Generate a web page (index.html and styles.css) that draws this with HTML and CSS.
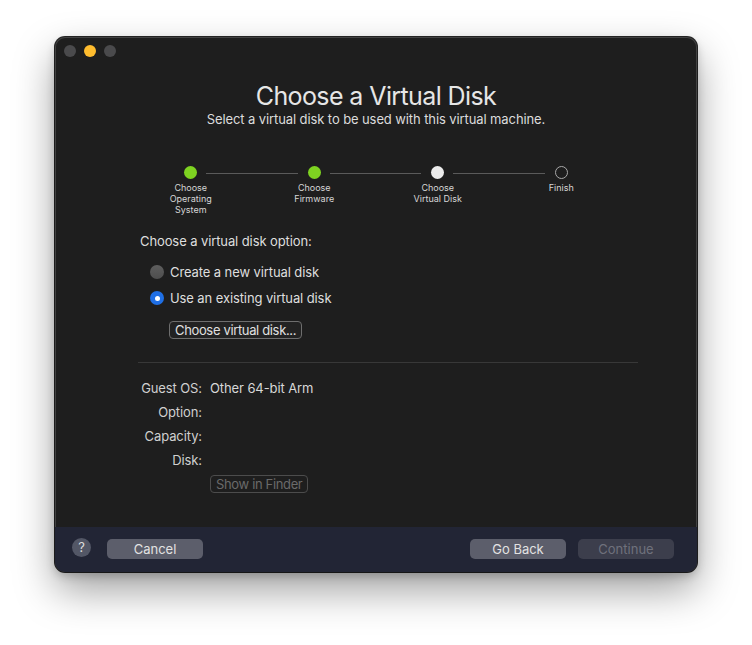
FILE: index.html
```html
<!DOCTYPE html>
<html>
<head>
<meta charset="utf-8">
<link rel="stylesheet" href="styles.css">
</head>
<body>
<div class="window">
  <div class="titlebar">
    <span class="light light-gray"></span>
    <span class="light light-yellow"></span>
    <span class="light light-gray"></span>
  </div>
  <div class="main">
    <h1 class="title">Choose a Virtual Disk</h1>
    <p class="subtitle">Select a virtual disk to be used with this virtual machine.</p>

    <div class="stepper">
      <div class="dots">
        <span class="dot done"></span>
        <span class="connector"></span>
        <span class="dot done"></span>
        <span class="connector"></span>
        <span class="dot current"></span>
        <span class="connector"></span>
        <span class="dot todo"></span>
      </div>
      <div class="step-labels">
        <span>Choose<br>Operating<br>System</span>
        <span>Choose<br>Firmware</span>
        <span>Choose<br>Virtual Disk</span>
        <span>Finish</span>
      </div>
    </div>

    <div class="content">
      <div class="heading">Choose a virtual disk option:</div>
      <div class="radios">
        <div class="radio-row"><span class="radio off"></span><span>Create a new virtual disk</span></div>
        <div class="radio-row"><span class="radio on"></span><span>Use an existing virtual disk</span></div>
      </div>
      <div class="choose-row"><button class="btn-outline">Choose virtual disk...</button></div>
      <div class="separator"></div>
      <div class="info">
        <span class="label">Guest OS:</span><span class="value">Other 64-bit Arm</span>
        <span class="label">Option:</span><span class="value"></span>
        <span class="label">Capacity:</span><span class="value"></span>
        <span class="label">Disk:</span><span class="value"></span>
        <span class="label"></span><span class="value"><button class="btn-outline disabled">Show in Finder</button></span>
      </div>
    </div>
  </div>
  <div class="footer">
    <span class="help">?</span>
    <button class="btn-foot">Cancel</button>
    <span class="spacer"></span>
    <button class="btn-foot">Go Back</button>
    <button class="btn-foot btn-disabled">Continue</button>
  </div>
</div>
</body>
</html>
```
FILE: styles.css
```css
* { box-sizing: border-box; }
html, body {
  margin: 0;
  padding: 0;
  background: #ffffff;
  width: 752px;
  height: 645px;
  overflow: hidden;
}
body {
  font-family: Inter, "Noto Sans", sans-serif;
  color: #dedede;
  padding: 37px 0 0 55px;
}
.window {
  width: 642px;
  height: 535px;
  background: #1e1e1e;
  border-radius: 10px;
  box-shadow: 0 0 0 1px rgba(0,0,0,0.85), inset 0 0 0 1px rgba(255,255,255,0.16), 0 18px 40px rgba(0,0,0,0.38), 0 4px 10px rgba(0,0,0,0.2);
  display: flex;
  flex-direction: column;
  overflow: hidden;
}
.titlebar {
  height: 28px;
  display: flex;
  align-items: center;
  gap: 8px;
  padding-left: 9px;
}
.light {
  width: 12px;
  height: 12px;
  border-radius: 50%;
}
.light-gray { background: #4a4a4c; }
.light-yellow { background: #febc2e; }
.main {
  flex: 1;
  display: flex;
  flex-direction: column;
}
.title {
  margin: 16px 0 0;
  font-size: 25px;
  line-height: 30px;
  font-weight: 400;
  text-align: center;
  color: #e6e6e6;
  letter-spacing: -0.6px;
}
.subtitle {
  margin: 0;
  font-size: 13px;
  line-height: 16px;
  text-align: center;
  color: #dcdcdc;
  letter-spacing: -0.1px;
}
.stepper {
  width: 494px;
  margin: 39px 0 0 74px;
}
.dots {
  display: flex;
  align-items: center;
  padding: 0 55px;
  height: 13px;
}
.dot {
  width: 13px;
  height: 13px;
  border-radius: 50%;
  flex: none;
}
.dot.done { background: #7ed321; }
.dot.current { background: #ececec; }
.dot.todo { border: 1px solid #a8a8a8; }
.connector {
  flex: 1;
  height: 1px;
  background: #5a5a5a;
  margin: 1px 10px 0 9px;
}
.step-labels {
  display: grid;
  grid-template-columns: repeat(4, 1fr);
  margin-top: 3px;
  font-size: 9px;
  line-height: 11px;
  text-align: center;
  color: #d6d6d6;
}
.content {
  margin: 18px 0 0 83px;
  width: 500px;
  font-size: 13px;
  line-height: 16px;
  letter-spacing: -0.1px;
}
.heading {
  padding-left: 2px;
  color: #dedede;
}
.radios {
  margin-top: 13px;
  padding-left: 12px;
  display: flex;
  flex-direction: column;
  gap: 6px;
}
.radio-row {
  display: flex;
  align-items: center;
  gap: 6px;
  height: 20px;
}
.radio {
  width: 14px;
  height: 14px;
  border-radius: 50%;
  flex: none;
}
.radio.off {
  background: linear-gradient(#5e5e5e, #4e4e4e);
}
.radio.on {
  background: #1f6fe5;
  position: relative;
}
.radio.on::after {
  content: "";
  position: absolute;
  left: 4.5px;
  top: 4.5px;
  width: 5px;
  height: 5px;
  border-radius: 50%;
  background: #fff;
}
.choose-row {
  margin-top: 13px;
  padding-left: 31px;
}
.btn-outline {
  font-family: inherit;
  font-size: 13px;
  line-height: 15px;
  letter-spacing: -0.35px;
  color: #e0e0e0;
  background: #222;
  border: 1px solid #6e6e6e;
  border-radius: 4px;
  height: 18px;
  padding: 0 5px;
}
.btn-outline.disabled {
  color: #6a6a6a;
  border-color: #4c4c4c;
  background: transparent;
  height: 18px;
}
.separator {
  margin-top: 23px;
  height: 1px;
  background: #383838;
}
.info {
  margin-top: 13px;
  display: grid;
  grid-template-columns: 64px auto;
  column-gap: 8px;
  grid-auto-rows: 24px;
  align-items: center;
}
.info .label {
  text-align: right;
  color: #d0d0d0;
}
.info .value {
  color: #d8d8d8;
}
.footer {
  height: 45px;
  background: #222535;
  display: flex;
  align-items: flex-start;
  padding: 11px 23px 0 17px;
}
.help {
  width: 19px;
  height: 19px;
  border-radius: 50%;
  background: #535766;
  color: #dcdcdc;
  font-size: 13px;
  line-height: 19px;
  text-align: center;
  margin-right: 16px;
}
.btn-foot {
  margin-top: 1px;
  width: 96px;
  height: 20px;
  border: none;
  border-radius: 5px;
  background: #5c5e6b;
  color: #e2e2e2;
  font-family: inherit;
  font-size: 13px;
  line-height: 20px;
  padding: 0;
}
.btn-foot + .btn-foot { margin-left: 12px; }
.btn-disabled {
  background: #3c3e4c;
  color: #6f717c;
}
.spacer { flex: 1; }
```
